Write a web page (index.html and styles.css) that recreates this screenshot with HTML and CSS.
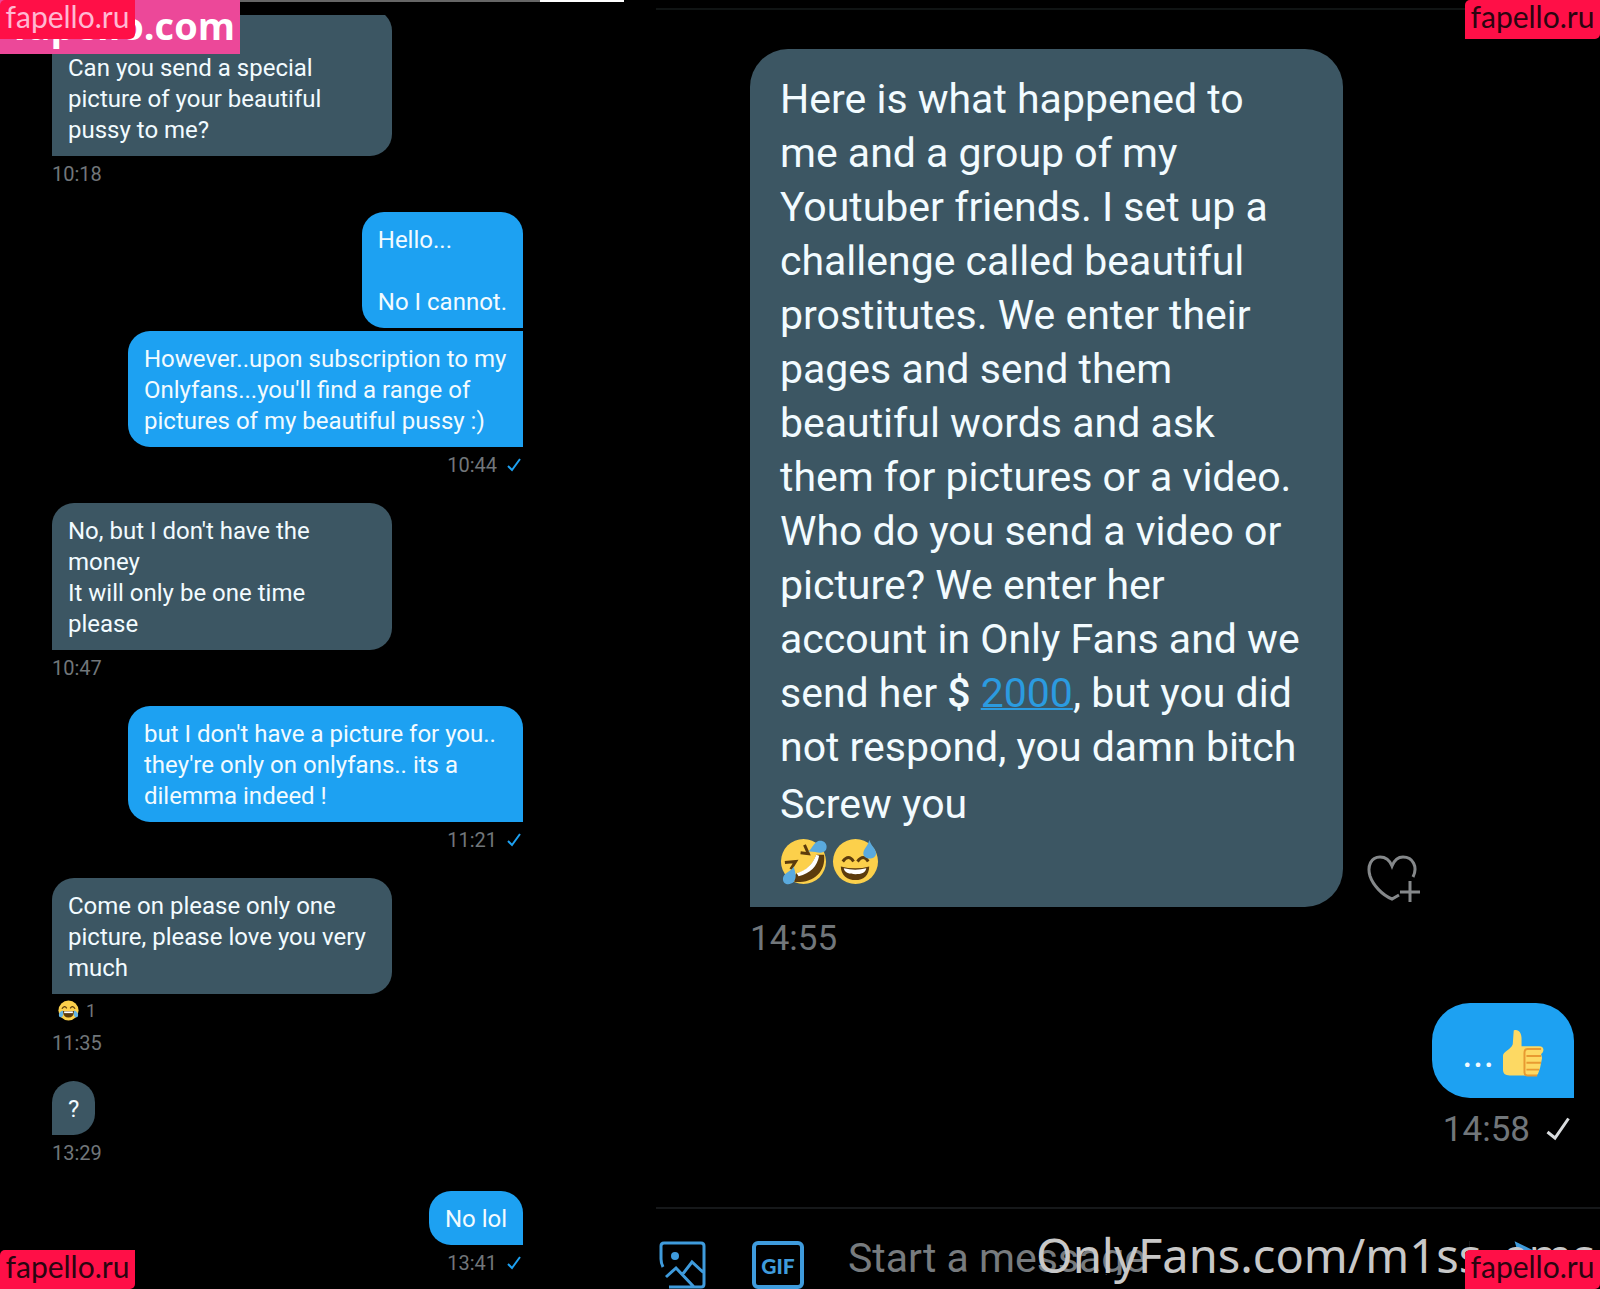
FILE: index.html
```html
<!DOCTYPE html>
<html lang="en">
<head>
  <meta charset="UTF-8">
  <meta name="viewport" content="width=device-width, initial-scale=1.0">
  <title>Messages</title>
  <link rel="stylesheet" href="styles.css">
</head>

<body>
  <div class="page">
    <main class="chat chat-small">
      <div class="top-strip"></div>

      <div class="row first">
        <p class="bubble wide"><br>Can you send a special<br>picture of your beautiful<br>pussy to me?</p>
        <div class="meta"><time>10:18</time></div>
      </div>

      <div class="row sent">
        <p class="bubble">Hello...<br><br>No I cannot.</p>
        <p class="bubble follow">However..upon subscription to my<br>Onlyfans...you'll find a range of<br>pictures of my beautiful pussy :)</p>
        <div class="meta">
          <time>10:44</time>
          <svg class="check" viewBox="0 0 16 16"><path d="M2 9l4 4L14 2"/></svg>
        </div>
      </div>

      <div class="row">
        <p class="bubble wide">No, but I don't have the<br>money<br>It will only be one time<br>please</p>
        <div class="meta"><time>10:47</time></div>
      </div>

      <div class="row sent">
        <p class="bubble full">but I don't have a picture for you..<br>they're only on onlyfans.. its a<br>dilemma indeed !</p>
        <div class="meta">
          <time>11:21</time>
          <svg class="check" viewBox="0 0 16 16"><path d="M2 9l4 4L14 2"/></svg>
        </div>
      </div>

      <div class="row">
        <p class="bubble wide">Come on please only one<br>picture, please love you very<br>much</p>
        <div class="reaction">
          <svg viewBox="0 0 48 48">
            <circle cx="24" cy="24" r="23" fill="#fcd04b"/>
            <path d="M9 20q6-9 11-1M28 19q5-8 11 1" fill="none" stroke="#5c3b0c" stroke-width="3"/>
            <path d="M11 25h26q-1 15-13 15T11 25z" fill="#5c3b0c"/>
            <path d="M14 26h20v4H14z" fill="#fff"/>
            <path d="M11 24c-7 2-11 8-8 14 6 5 11-2 8-14zM37 24c7 2 11 8 8 14-6 5-11-2-8-14z" fill="#63b4e4"/>
          </svg>
          <span>1</span>
        </div>
        <div class="meta"><time>11:35</time></div>
      </div>

      <div class="row">
        <p class="bubble">?</p>
        <div class="meta"><time>13:29</time></div>
      </div>

      <div class="row sent">
        <p class="bubble">No lol</p>
        <div class="meta">
          <time>13:41</time>
          <svg class="check" viewBox="0 0 16 16"><path d="M2 9l4 4L14 2"/></svg>
        </div>
      </div>
    </main>

    <section class="chat chat-large">
      <div class="thread">
        <div class="row">
          <div class="with-like">
            <div class="bubble">
              <p>Here is what happened to<br>me and a group of my<br>Youtuber friends. I set up a<br>challenge called beautiful<br>prostitutes. We enter their<br>pages and send them<br>beautiful words and ask<br>them for pictures or a video.<br>Who do you send a video or<br>picture? We enter her<br>account in Only Fans and we<br>send her <b>$</b> <a href="#">2000</a>, but you did<br>not respond, you damn bitch</p>
              <p>Screw you</p>
              <p class="emojis">
                <svg viewBox="0 0 48 48">
                  <circle cx="24" cy="24" r="23" fill="#fcd04b"/>
                  <path d="M45 17c2 18-11 29-30 28-2-3-1-6 2-9 9-2 16-8 20-19z" fill="#5c3b0c"/>
                  <path d="M17 36c10-3 16-9 20-19l3 1c-2 11-9 18-21 21z" fill="#fff"/>
                  <path d="M21 15l8 1-4-9M5 25l11-1-5 8" fill="none" stroke="#5c3b0c" stroke-width="3"/>
                  <path d="M28 14c4-1 5-8 11-11 7-1 10 4 8 9-4 6-11 1-19 2zM14 29c1 5 4 10 0 16-5 4-11 2-11-3 0-7 8-7 11-13z" fill="#5aaade"/>
                </svg>
                <svg viewBox="0 0 48 48">
                  <circle cx="24" cy="24" r="23" fill="#fcd04b"/>
                  <path d="M11 24q6-8 11 0M26 24q6-8 11 0" fill="none" stroke="#5c3b0c" stroke-width="3"/>
                  <path d="M9 29q15 4 29 0c0 9-6 14-14 14S9 38 9 29z" fill="#5c3b0c"/>
                  <path d="M12 31q12 3 23 0c-1 5-5 6-11 6s-11-1-12-6z" fill="#fff"/>
                  <path d="M38 2c-1 6-6 9-6 14 0 6 12 7 13 0 0-5-5-8-7-14z" fill="#5aaade"/>
                </svg>
              </p>
            </div>
            <button type="button" class="like" aria-label="Add reaction">
              <svg viewBox="0 0 54 50">
                <path d="M46 23c5-10 0-20-10-20-6 0-9 4-11 9-2-5-6-9-12-9C4 3 0 12 3 22c3 9 12 19 22 23l7-4M43 27v21M33 38h20"/>
              </svg>
            </button>
          </div>
          <div class="meta"><time>14:55</time></div>
        </div>

        <div class="row sent">
          <div class="bubble thumb">
            <span>...</span>
            <svg viewBox="0 0 44 48">
              <path d="M12 1c5-2 8 3 8 8v8h18c6 0 5 6 2 8l1 4-2 10-2 6c-1 2-3 2-5 2H8c-5 0-7-2-7-6V27c0-5 8-6 10-12z" fill="#fdd963"/>
              <path d="M40 20H26q-3 0-3 4v20q0 3 3 3h10M25 27h15M25 34h15M25 41h13" fill="none" stroke="#e89a31" stroke-width="2"/>
            </svg>
          </div>
          <div class="meta">
            <time>14:58</time>
            <svg class="check" viewBox="0 0 16 16"><path d="M1 10l5 4L15 1"/></svg>
          </div>
        </div>
      </div>

      <form class="composer">
        <button type="button" aria-label="Add photo">
          <svg viewBox="0 0 48 48">
            <path d="M5 26Q3 22 3 18V5q0-3 3-3h37q3 0 3 3v38q0 3-3 3H11M8 36l10-9 18 19M24 34l10-13 12 11"/>
            <circle class="dot" cx="17" cy="15" r="4"/>
          </svg>
        </button>
        <button type="button" class="gif" aria-label="Add GIF">GIF</button>
        <input type="text" placeholder="Start a message" aria-label="Start a message">
        <button type="submit" class="send" aria-label="Send">
          <svg viewBox="0 0 48 48"><path d="M3 3l42 21L3 45l6-21z"/></svg>
        </button>
      </form>
    </section>

    <!-- watermarks -->
    <div class="mark-com">fapello.com</div>
    <div class="mark-user">OnlyFans.com/m1ss_ems</div>
    <div class="tag top left">fapello.ru</div>
    <div class="tag top right">fapello.ru</div>
    <div class="tag bottom left">fapello.ru</div>
    <div class="tag bottom right">fapello.ru</div>
  </div>
</body>
</html>
```
FILE: styles.css
```css
* {
  box-sizing: border-box;
}

body {
  margin: 0;
  background-color: #000;
  color: #fff;
  font-family: Roboto, sans-serif;
}

p {
  margin: 0;
}

button {
  border: none;
  padding: 0;
  background: none;
  cursor: pointer;
}

svg {
  display: block;
}

.page {
  position: relative;
  display: grid;
  grid-template-columns: 41% 59%;
  min-height: 100vh;
  overflow: hidden;
}

.row {
  display: flex;
  flex-direction: column;
  align-items: flex-start;
}

.row.sent {
  align-items: flex-end;
}

.bubble {
  background-color: #3c5663;
  color: #f2fbff;
}

.sent .bubble {
  background-color: #1da1f2;
}

.meta {
  display: flex;
  align-items: center;
  color: #71767a;
}

.check {
  fill: none;
  stroke: #1da1f2;
  stroke-width: 2;
}

/* left conversation */
.chat-small {
  position: relative;
  display: flex;
  flex-direction: column;
  gap: 20px;
  padding: 9px 133px 0 52px;
}

.top-strip {
  position: absolute;
  top: 0;
  left: 0;
  width: 624px;
  height: 15px;
  background-color: #000;
  border-top: 2px solid #666;
}

.top-strip::after {
  content: "";
  position: absolute;
  top: -2px;
  right: 0;
  width: 84px;
  height: 2px;
  background-color: #fff;
}

.chat-small .bubble {
  padding: 13px 16px 10px;
  border-radius: 22px 22px 22px 0;
  font-size: 24px;
  line-height: 31px;
  white-space: nowrap;
}

.chat-small .wide {
  width: 340px;
}

.chat-small .sent .bubble {
  border-radius: 22px 22px 0 22px;
}

.chat-small .full {
  width: 395px;
}

.chat-small .sent .follow {
  width: 395px;
  margin-top: 3px;
  border-top-right-radius: 0;
}

.chat-small .meta {
  gap: 8px;
  height: 36px;
  font-size: 20px;
}

.chat-small .check {
  width: 18px;
  height: 16px;
}

.reaction {
  display: flex;
  align-items: center;
  gap: 7px;
  height: 31px;
  padding: 2px 6px 0;
  color: #71767a;
  font-size: 18px;
}

.reaction svg {
  width: 21px;
  height: 21px;
}

/* right conversation */
.chat-large {
  display: flex;
  flex-direction: column;
}

.thread {
  display: flex;
  flex: 1;
  flex-direction: column;
  gap: 34px;
  margin-top: 8px;
  padding: 39px 26px 0 94px;
  border-top: 2px solid #101414;
}

.with-like {
  display: flex;
  align-items: flex-end;
  gap: 24px;
}

.chat-large .bubble {
  width: 593px;
  padding: 23px 30px 19px;
  border-radius: 38px 38px 38px 0;
  font-size: 41px;
  line-height: 54px;
  white-space: nowrap;
}

.bubble p + p {
  margin-top: 3px;
}

.bubble b {
  font-weight: 500;
}

.bubble a {
  color: #2b9be0;
  text-decoration-thickness: 2px;
}

.emojis {
  display: flex;
  align-items: center;
  gap: 5px;
  height: 54px;
}

.emojis svg {
  width: 47px;
  height: 47px;
}

.like svg {
  width: 54px;
  height: 50px;
  margin-bottom: 3px;
  fill: none;
  stroke: #85888a;
  stroke-width: 3;
}

.chat-large .sent .thumb {
  display: flex;
  align-items: center;
  gap: 8px;
  width: 142px;
  height: 95px;
  border-radius: 38px 38px 0 38px;
}

.thumb svg {
  flex: none;
  width: 43px;
  height: 48px;
}

.chat-large .meta {
  gap: 16px;
  height: 62px;
  font-size: 35px;
}

.chat-large .sent .meta {
  padding-right: 4px;
}

.chat-large .check {
  width: 24px;
  height: 24px;
  stroke: #d9dcde;
}

.composer {
  display: flex;
  align-items: flex-start;
  height: 82px;
  padding: 32px 38px 0 2px;
  border-top: 2px solid #16181a;
}

.composer svg {
  width: 48px;
  height: 48px;
  fill: none;
  stroke: #3f9bdc;
  stroke-width: 3;
}

.composer .dot {
  fill: #3f9bdc;
  stroke: none;
}

.composer .send svg {
  fill: #3f9bdc;
}

.composer .gif {
  width: 52px;
  height: 48px;
  margin-left: 46px;
  border: 4px solid #3f9bdc;
  border-radius: 6px;
  color: #3f9bdc;
  font-family: Lato, sans-serif;
  font-size: 21px;
  font-weight: 900;
}

.composer input {
  flex: 1;
  min-width: 0;
  height: 34px;
  margin-right: 44px;
  margin-left: 44px;
  padding: 0;
  border: none;
  border-right: 1px solid #16181a;
  outline: none;
  background: none;
  color: #fff;
  font-family: inherit;
  font-size: 41px;
}

.composer input::placeholder {
  color: #777b7e;
}

/* watermarks lie over both conversations */
.mark-com,
.mark-user,
.tag {
  position: absolute;
  white-space: nowrap;
}

.mark-com {
  top: 0;
  left: 0;
  width: 240px;
  height: 54px;
  padding-right: 5px;
  background-color: #ec4899;
  font-family: "Open Sans", sans-serif;
  font-size: 38px;
  font-weight: 700;
  line-height: 50px;
  text-align: right;
}

.mark-user {
  right: 5px;
  bottom: 0;
  color: #c8c8c8;
  font-family: "Noto Sans", sans-serif;
  font-size: 47px;
  line-height: 68px;
}

.tag {
  width: 135px;
  height: 39px;
  background-color: #ff0f47;
  color: #2b0510;
  font-family: Lato, sans-serif;
  font-size: 30px;
  line-height: 33px;
  text-align: center;
}

.tag.top {
  top: 0;
}

.tag.bottom {
  bottom: 0;
}

.tag.left {
  left: 0;
  border-radius: 5px 0 5px 0;
}

.tag.right {
  right: 0;
  border-radius: 5px 0 5px 0;
}

.tag.top.left {
  color: #ffb8d2;
}
```
